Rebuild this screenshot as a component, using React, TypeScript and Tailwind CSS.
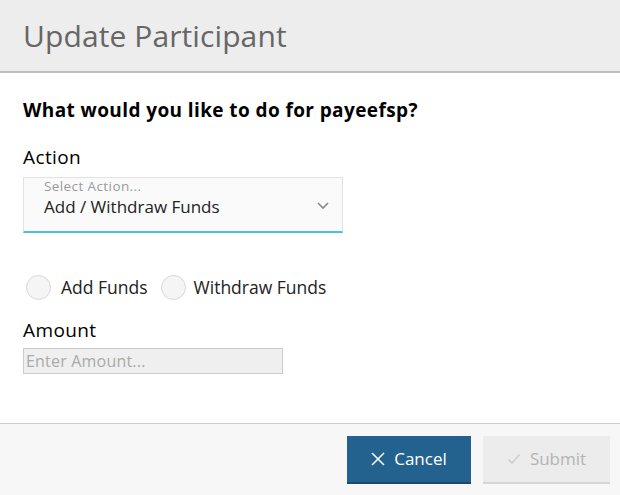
import { useState } from "react";

export default function App() {
  const [mode, setMode] = useState<"add" | "withdraw" | null>(null);

  return (
    <div
      className="w-[620px] h-[495px] bg-white flex flex-col overflow-hidden"
      style={{ fontFamily: '"Open Sans", "DejaVu Sans", sans-serif' }}
    >
      {/* Header */}
      <div className="h-[73px] shrink-0 bg-[#ededed] border-b-2 border-[#bdbdbd] flex items-center px-[23px]">
        <h1 className="text-[30px] leading-[36px] text-[#666666] tracking-[0.1px]">Update Participant</h1>
      </div>

      {/* Body */}
      <div className="flex-1 px-[23px] pt-[23px]">
        <h2 className="text-[19px] font-bold text-black leading-[28px] tracking-[0.4px]">
          What would you like to do for payeefsp?
        </h2>

        <div className="mt-[20px] text-[19px] text-black leading-[26px] tracking-[0.4px]">Action</div>
        <div className="mt-[7px] w-[320px] h-[56px] bg-[#fafafa] border border-[#e2e2e2] border-b-2 border-b-[#4dbfe0] flex items-start pl-[20px] pr-[12px]">
          <div className="flex-1 flex flex-col">
            <span className="text-[13.5px] leading-[17px] text-[#9a9a9a] tracking-[0.4px]">Select Action...</span>
            <span className="text-[17px] leading-[23px] text-[#222]">Add / Withdraw Funds</span>
          </div>
          <svg width="14" height="14" viewBox="0 0 14 14" className="mt-[20px] text-[#8a8a8a]">
            <path d="M2 5l5 5 5-5" fill="none" stroke="currentColor" strokeWidth="1.6" />
          </svg>
        </div>

        <div className="mt-[41px] ml-[3px] flex items-center gap-[13px] text-[17.5px] text-[#222]">
          <button
            onClick={() => setMode("add")}
            className="flex items-center gap-[10px]"
          >
            <span className="w-[25px] h-[25px] rounded-full bg-[#f5f5f5] border border-[#d8d8d8]" />
            Add Funds
          </button>
          <button
            onClick={() => setMode("withdraw")}
            className="flex items-center gap-[8px]"
          >
            <span className="w-[25px] h-[25px] rounded-full bg-[#f5f5f5] border border-[#d8d8d8]" />
            Withdraw Funds
          </button>
          {mode && <span className="hidden">{mode}</span>}
        </div>

        <div className="mt-[17px] text-[19px] text-black leading-[26px] tracking-[0.4px]">Amount</div>
        <input
          placeholder="Enter Amount..."
          className="mt-[5px] w-[260px] h-[26px] bg-[#efefef] border border-[#cccccc] px-[2px] text-[16px] tracking-[0.2px] placeholder:text-[#aaaaaa] outline-none"
        />
      </div>

      {/* Footer */}
      <div className="h-[72px] shrink-0 bg-[#f7f7f7] border-t border-[#cccccc] flex items-center justify-end gap-[12px] px-[10px]">
        <button className="w-[124px] h-[48px] bg-[#23628f] border-b-2 border-[#1a4a6e] text-white text-[17px] flex items-center justify-center gap-[9px]">
          <svg width="14" height="14" viewBox="0 0 14 14">
            <path d="M1 1l12 12M13 1L1 13" stroke="currentColor" strokeWidth="1.5" />
          </svg>
          Cancel
        </button>
        <button className="w-[127px] h-[48px] bg-[#ececec] border-b-2 border-[#d6d6d6] text-[#b3b3b3] text-[17px] flex items-center justify-center gap-[9px]">
          <svg width="14" height="14" viewBox="0 0 14 14">
            <path d="M1.5 7.5l3.5 3.5 7.5-8.5" fill="none" stroke="#cfcfcf" strokeWidth="1.6" />
          </svg>
          Submit
        </button>
      </div>
    </div>
  );
}
